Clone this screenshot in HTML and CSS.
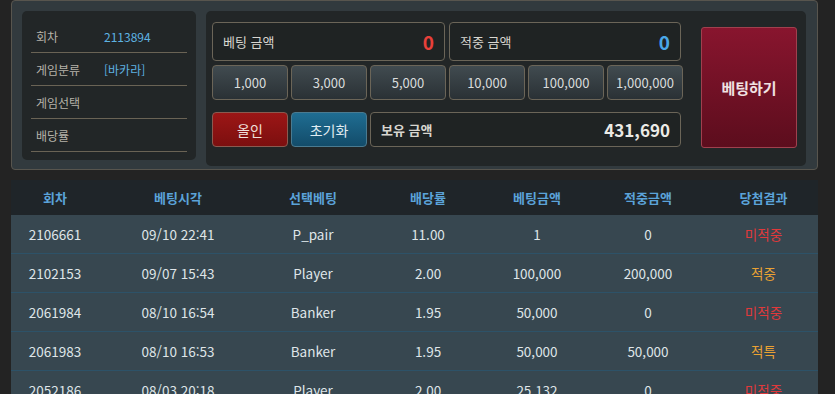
FILE: index.html
```html
<!DOCTYPE html>
<html lang="ko">

<head>
    <meta charset="UTF-8">
    <meta name="viewport" content="width=device-width, initial-scale=1.0">
    <title>바카라 베팅</title>
    <link rel="stylesheet" href="styles.css">
</head>

<body>
    <div class="bet-panel">
        <div class="info-card">
            <div class="info-row"><span class="info-label">회차</span><span class="info-value">2113894</span></div>
            <div class="info-row"><span class="info-label">게임분류</span><span class="info-value">[바카라]</span></div>
            <div class="info-row"><span class="info-label">게임선택</span><span class="info-value"></span></div>
            <div class="info-row"><span class="info-label">배당률</span><span class="info-value"></span></div>
        </div>

        <div class="bet-card">
            <div class="bet-grid">
                <div class="amount-box amount-wide">
                    <span>베팅 금액</span><span class="amount-red">0</span>
                </div>
                <div class="amount-box amount-wide">
                    <span>적중 금액</span><span class="amount-blue">0</span>
                </div>

                <button class="chip">1,000</button>
                <button class="chip">3,000</button>
                <button class="chip">5,000</button>
                <button class="chip">10,000</button>
                <button class="chip">100,000</button>
                <button class="chip">1,000,000</button>

                <button class="chip btn-allin">올인</button>
                <button class="chip btn-reset">초기화</button>
                <div class="amount-box amount-hold">
                    <span>보유 금액</span><span class="amount-white">431,690</span>
                </div>
            </div>
            <button class="btn-bet">베팅하기</button>
        </div>
    </div>

    <table class="history">
        <thead>
            <tr>
                <th class="c1">회차</th>
                <th class="c2">베팅시각</th>
                <th class="c3">선택베팅</th>
                <th class="c4">배당률</th>
                <th class="c5">베팅금액</th>
                <th class="c6">적중금액</th>
                <th class="c7">당첨결과</th>
            </tr>
        </thead>
        <tbody>
            <tr>
                <td>2106661</td><td>09/10 22:41</td><td>P_pair</td><td>11.00</td><td>1</td><td>0</td><td class="lose">미적중</td>
            </tr>
            <tr>
                <td>2102153</td><td>09/07 15:43</td><td>Player</td><td>2.00</td><td>100,000</td><td>200,000</td><td class="win">적중</td>
            </tr>
            <tr>
                <td>2061984</td><td>08/10 16:54</td><td>Banker</td><td>1.95</td><td>50,000</td><td>0</td><td class="lose">미적중</td>
            </tr>
            <tr>
                <td>2061983</td><td>08/10 16:53</td><td>Banker</td><td>1.95</td><td>50,000</td><td>50,000</td><td class="win">적특</td>
            </tr>
            <tr>
                <td>2052186</td><td>08/03 20:18</td><td>Player</td><td>2.00</td><td>25,132</td><td>0</td><td class="lose">미적중</td>
            </tr>
        </tbody>
    </table>
</body>

</html>
```

FILE: styles.css
```css
body {
    margin: 0;
    padding: 0;
    background-color: #232323;
    font-family: "Noto Sans CJK KR", "Noto Sans", sans-serif;
    color: #dfe5e8;
    overflow: hidden;
}

/* Top betting panel */
.bet-panel {
    display: flex;
    align-items: flex-start;
    gap: 10px;
    width: 807px;
    height: 170px;
    margin: 0 0 0 11px;
    padding: 10px 11px 0 10px;
    box-sizing: border-box;
    background-color: #323a3e;
    border: 1px solid #58554e;
    border-radius: 4px;
}

.info-card {
    width: 174px;
    padding: 9px 9px 8px 9px;
    box-sizing: border-box;
    background-color: #222627;
    border-radius: 5px;
}

.info-row {
    display: flex;
    align-items: center;
    height: 32px;
    padding-left: 5px;
    border-bottom: 1px solid #6a6355;
    font-size: 12px;
}

.info-label {
    width: 68px;
    color: #b5b2a9;
}

.info-value {
    color: #5eb2e2;
}

.bet-card {
    flex: 1;
    display: flex;
    align-items: flex-start;
    gap: 18px;
    height: 155px;
    padding: 11px 9px 0 6px;
    box-sizing: border-box;
    background-color: #222627;
    border-radius: 5px;
}

.bet-grid {
    display: grid;
    grid-template-columns: repeat(6, 76px);
    grid-template-rows: 39px 35px 43px;
    column-gap: 3px;
    row-gap: 4px;
}

.bet-grid .btn-allin,
.bet-grid .btn-reset,
.bet-grid .amount-hold {
    margin-top: 8px;
}

.amount-box {
    display: flex;
    align-items: center;
    justify-content: space-between;
    padding: 0 10px 0 10px;
    border: 1px solid #6b6558;
    border-radius: 4px;
    background-color: #1f2323;
    font-size: 13px;
    color: #d8d6d0;
}

.amount-wide {
    grid-column: span 3;
    margin-right: 1px;
}

.amount-wide + .amount-wide {
    margin-right: 2px;
}

.amount-hold {
    grid-column: span 4;
    margin-right: 2px;
    font-weight: bold;
}

.amount-red {
    color: #e8403a;
    font-size: 19px;
    font-weight: bold;
}

.amount-blue {
    color: #4aa8e8;
    font-size: 19px;
    font-weight: bold;
}

.amount-white {
    color: #ecebe6;
    font-size: 17px;
    font-weight: bold;
}

.chip {
    padding: 0;
    border: 1px solid #6b6558;
    border-radius: 4px;
    background: linear-gradient(#414b50, #2a3135);
    color: #d9dcdc;
    font-family: "Noto Sans CJK KR", "Noto Sans", sans-serif;
    font-size: 13px;
    cursor: pointer;
}

.btn-allin {
    background: linear-gradient(#9c1616, #7c0f0f);
    border-color: #8a5a50;
    color: #f0e0dc;
    font-size: 14px;
}

.btn-reset {
    background: linear-gradient(#1f6d92, #134c6a);
    border-color: #4a7a90;
    color: #e0ecf2;
    font-size: 14px;
}

.btn-bet {
    width: 96px;
    height: 121px;
    margin-top: 5px;
    border: 1px solid #a0404e;
    border-radius: 3px;
    background: linear-gradient(#88152e, #5c0d1d);
    color: #f0e2e2;
    font-family: "Noto Sans CJK KR", "Noto Sans", sans-serif;
    font-size: 15px;
    font-weight: bold;
    cursor: pointer;
}

/* History table */
.history {
    width: 807px;
    margin: 10px 0 0 11px;
    border-collapse: collapse;
    table-layout: fixed;
    font-size: 13px;
}

.history th {
    height: 35px;
    padding: 0;
    background-color: #1f2529;
    color: #5ba3d9;
    font-weight: bold;
}

.history td {
    height: 38px;
    padding: 0;
    text-align: center;
    font-size: 13.5px;
    background-color: #374750;
    border-bottom: 1px solid #2d5268;
}

.c1 { width: 88px; }
.c2 { width: 158px; }
.c3 { width: 112px; }
.c4 { width: 118px; }
.c5 { width: 100px; }
.c6 { width: 122px; }
.c7 { width: 109px; }

.lose {
    color: #e0393b;
}

.win {
    color: #eaa233;
}
```
